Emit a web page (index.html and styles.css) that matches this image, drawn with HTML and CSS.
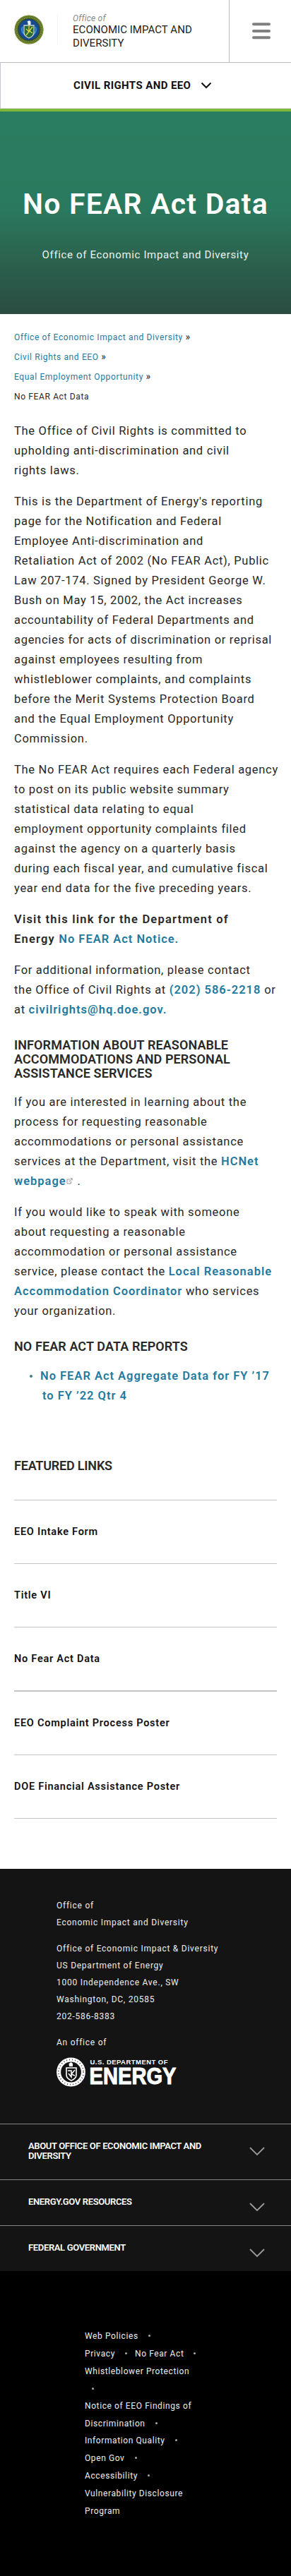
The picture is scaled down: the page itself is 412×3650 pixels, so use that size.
FILE: index.html
```html
<!DOCTYPE html>
<html lang="en">
<head>
<meta charset="utf-8">
<title>No FEAR Act Data</title>
<link rel="stylesheet" href="styles.css">
</head>
<body>
<header class="top">
  <div class="brand">
    <svg class="seal" viewBox="0 0 42 42" aria-hidden="true">
      <circle cx="21" cy="21" r="20.5" fill="#52691f"/>
      <circle cx="21" cy="21" r="19.8" fill="none" stroke="#93a83d" stroke-width=".8"/>
      <circle cx="21" cy="21" r="17.6" fill="none" stroke="#a9b45a" stroke-width="2" stroke-dasharray="1.2 1.3" opacity=".65"/>
      <circle cx="21" cy="21" r="15.2" fill="#164b91" stroke="#2d3f28" stroke-width=".8"/>
      <path d="M12 17q-3 6 3 11M30 17q3 6-3 11" fill="none" stroke="#3c8ed0" stroke-width="2"/>
      <path d="M18.500 9.500l3-1.500 2 1.500v5h-4v-3z" fill="#eef3f4"/>
      <path d="M14 15h14v10q0 5-7 8-7-3-7-8z" fill="#2a6a3a" stroke="#c7d3cc" stroke-width="1.300"/>
      <path d="M17 29l9-12M21 16v8l-4-4M26 26l-4-3" fill="none" stroke="#d9d748" stroke-width="1.300"/>
    </svg>
    <div class="brand-name"><em>Office of</em><span>ECONOMIC IMPACT AND</span><span>DIVERSITY</span></div>
  </div>
  <div class="menu"><svg width="26" height="24" viewBox="0 0 26 24"><path d="M2 2.200h22M2 12h22M2 21.300h22" stroke="#808080" stroke-width="4" stroke-linecap="round"/></svg></div>
</header>
<nav class="section-nav"><span>CIVIL RIGHTS AND EEO</span><svg width="16" height="10" viewBox="0 0 16 10"><path d="M1.500 1.500L8 8l6.500-6.500" fill="none" stroke="#111" stroke-width="2"/></svg></nav>
<section class="hero">
  <h1>No FEAR Act Data</h1>
  <p>Office of Economic Impact and Diversity</p>
</section>
<main>
  <ul class="crumbs">
    <li><a>Office of Economic Impact and Diversity</a> <span>»</span></li>
    <li><a>Civil Rights and EEO</a> <span>»</span></li>
    <li><a>Equal Employment Opportunity</a> <span>»</span></li>
    <li>No FEAR Act Data</li>
  </ul>
  <article class="copy">
    <p>The Office of Civil Rights is committed to<br>upholding anti-discrimination and civil<br>rights laws.</p>
    <p>This is the Department of Energy's reporting<br>page for the Notification and Federal<br>Employee Anti-discrimination and<br>Retaliation Act of 2002 (No FEAR Act), Public<br>Law 207-174. Signed by President George W.<br>Bush on May 15, 2002, the Act increases<br>accountability of Federal Departments and<br>agencies for acts of discrimination or reprisal<br>against employees resulting from<br>whistleblower complaints, and complaints<br>before the Merit Systems Protection Board<br>and the Equal Employment Opportunity<br>Commission.</p>
    <p>The No FEAR Act requires each Federal agency<br>to post on its public website summary<br>statistical data relating to equal<br>employment opportunity complaints filed<br>against the agency on a quarterly basis<br>during each fiscal year, and cumulative fiscal<br>year end data for the five preceding years.</p>
    <p><b>Visit this link for the Department of<br>Energy <a>No FEAR Act Notice</a></b><a>.</a></p>
    <p>For additional information, please contact<br>the Office of Civil Rights at <a>(202) 586-2218</a> or<br>at <a>civilrights@hq.doe.gov.</a></p>
    <h2>INFORMATION ABOUT REASONABLE<br>ACCOMMODATIONS AND PERSONAL<br>ASSISTANCE SERVICES</h2>
    <p>If you are interested in learning about the<br>process for requesting reasonable<br>accommodations or personal assistance<br>services at the Department, visit the <a>HCNet<br>webpage</a><svg class="ext" width="9" height="9" viewBox="0 0 9 9"><path d="M5 2H1v6h5.500V4.500M4 5l4-4M5.500.800H8.200V3.500" fill="none" stroke="#999" stroke-width="1"/></svg> .</p>
    <p>If you would like to speak with someone<br>about requesting a reasonable<br>accommodation or personal assistance<br>service, please contact the <a>Local Reasonable<br>Accommodation Coordinator</a> who services<br>your organization.</p>
    <h2 class="reports">NO FEAR ACT DATA REPORTS</h2>
    <ul class="report-list"><li><a>No FEAR Act Aggregate Data for FY ’17<br><span class="hang">to FY ’22 Qtr 4</span></a></li></ul>
  </article>
  <section class="featured">
    <h2>FEATURED LINKS</h2>
    <ul>
      <li>EEO Intake Form</li>
      <li>Title VI</li>
      <li class="heavy">No Fear Act Data</li>
      <li>EEO Complaint Process Poster</li>
      <li>DOE Financial Assistance Poster</li>
    </ul>
  </section>
</main>
<footer>
  <div class="contact">
    <p>Office of<br>Economic Impact and Diversity</p>
    <p>Office of Economic Impact &amp; Diversity<br>US Department of Energy<br>1000 Independence Ave., SW<br>Washington, DC, 20585<br>202-586-8383</p>
    <p>An office of</p>
    <svg class="doe" width="176" height="50" viewBox="0 -2 176 50">
      <circle cx="20.500" cy="21" r="17.400" fill="none" stroke="#fff" stroke-width="6"/>
      <circle cx="20.500" cy="21" r="17.600" fill="none" stroke="#222" stroke-width="1.800" stroke-dasharray=".8 3.200"/>
      <path d="M17.500 9l3-2 2.500 2v4h-5z" fill="#fff"/>
      <path d="M14 15h14v10q0 5-7 8-7-3-7-8z" fill="#141414" stroke="#fff" stroke-width="1.600"/>
      <path d="M16 19h5v9l-4-5M26 18l-5 6 5 2" fill="none" stroke="#fff" stroke-width="1.500"/>
      <text x="47.500" y="9.500" class="doe-small" textLength="110">U.S. DEPARTMENT OF</text>
      <text x="46.500" y="37.500" class="doe-big" textLength="123" lengthAdjust="spacingAndGlyphs">ENERGY</text>
    </svg>
  </div>
  <div class="panel tall"><h3>ABOUT OFFICE OF ECONOMIC IMPACT AND<br>DIVERSITY</h3><svg width="22" height="13" viewBox="0 0 22 13"><path d="M1 1l10 10L21 1" /></svg></div>
  <div class="panel"><h3>ENERGY.GOV RESOURCES</h3><svg width="22" height="13" viewBox="0 0 22 13"><path d="M1 1l10 10L21 1" /></svg></div>
  <div class="panel"><h3>FEDERAL GOVERNMENT</h3><svg width="22" height="13" viewBox="0 0 22 13"><path d="M1 1l10 10L21 1" /></svg></div>
  <div class="legal">
    <div>Web Policies<i></i></div>
    <div>Privacy<i></i><span>No Fear Act</span><i></i></div>
    <div class="tight">Whistleblower Protection<br><i class="alone"></i></div>
    <div class="tight">Notice of EEO Findings of<br>Discrimination<i></i></div>
    <div>Information Quality<i></i></div>
    <div>Open Gov<i></i></div>
    <div>Accessibility<i></i></div>
    <div class="tight">Vulnerability Disclosure<br>Program</div>
  </div>
</footer>
</body>
</html>
```
FILE: styles.css
```css
* { box-sizing: border-box; }
body { margin: 0; background: #fff; color: #282828; font-family: Roboto, "Liberation Sans", sans-serif; font-size: 16px; white-space: nowrap; font-kerning: normal; }
h1, h2, h3, p, ul { margin: 0; padding: 0; }
ul { list-style: none; }
svg { display: block; flex: none; }
a { color: #1f7a9f; }

.top { display: flex; height: 89px; border-bottom: 1px solid #bdbdbd; }
.brand { display: flex; width: 324px; padding-left: 20px; }
.seal { width: 42px; height: 42px; margin-top: 21px; }
.brand-name { display: flex; flex-direction: column; height: 43px; margin: 20px 0 0 19px; padding-left: 21px; border-left: 1px solid #f3f3f3; font-size: 15px; line-height: 19px; letter-spacing: .05px; color: #222; }
.brand-name em { font-size: 12px; line-height: 13px; color: #8a8a8a; letter-spacing: .2px; }
.menu { flex: 1; display: flex; align-items: flex-start; justify-content: center; padding: 32px 0 0 2px; border-left: 1px solid #bdbdbd; }

.section-nav { display: flex; align-items: center; height: 65px; padding-left: 103px; gap: 14px; border-left: 1px solid #c8c8d0; border-bottom: 1px solid #ddd; font-size: 15px; font-weight: 700; color: #111; letter-spacing: .4px; }

.hero { height: 291px; border-top: 4px solid #7db73b; background: linear-gradient(#2a7d60 0%, #2a795e 48%, #2b6550 70%, #2a4c41 100%); color: #fff; text-align: center; padding-top: 107px; }
.hero h1 { font-size: 41px; line-height: 48px; font-weight: 600; letter-spacing: 1.2px; }
.hero p { margin-top: 36px; font-size: 15px; line-height: 24px; letter-spacing: .65px; color: #e9f3ef; }

main { padding: 19px 20px 0; }
.crumbs { font-size: 12px; line-height: 28px; letter-spacing: .64px; }
.crumbs span { font-size: 14px; line-height: 1; letter-spacing: 0; }
.copy { padding-top: 21px; font-size: 16.5px; line-height: 28px; letter-spacing: .7px; }
.copy p { margin-bottom: 16px; }
.copy a, .copy b { font-weight: 600; letter-spacing: .98px; }
.copy b { letter-spacing: 1.2px; }
.copy b a { letter-spacing: .98px; }
h2 { font-size: 18px; line-height: 20px; font-weight: 600; letter-spacing: -.2px; }
.copy h2 { margin: 26px 0 17px; letter-spacing: .1px; }
.copy h2.reports { margin-bottom: 18px; }
.ext { display: inline-block; vertical-align: 1px; margin: 0 2px 0 0; }
.report-list { padding-left: 37px; }
.report-list .hang { padding-left: 3px; }
.report-list li::before { content: ""; float: left; width: 4px; height: 4px; margin: 12px 0 0 -15px; border-radius: 50%; background: #3d8080; }
.featured { padding-top: 75px; }
.featured ul { margin-top: 38px; border-top: 1px solid #c4c4c4; }
.featured li { height: 90px; border-bottom: 1px solid #c4c4c4; font-size: 14.5px; line-height: 90px; font-weight: 600; letter-spacing: .75px; color: #111; }
.featured li.heavy { height: 91px; border-bottom-width: 2px; }

footer { margin-top: 71px; background: #141414; color: #ededed; font-size: 12px; letter-spacing: .75px; }
.contact { height: 361px; padding: 40px 0 0 80px; line-height: 24px; }
.contact p { margin-bottom: 13px; }
.doe { margin-top: -6px; overflow: visible; }
.doe-small { font: 700 9.5px "Liberation Sans", sans-serif; letter-spacing: 0; fill: #fff; }
.doe-big { font: 700 33px "Liberation Sans", sans-serif; letter-spacing: 0; fill: #fff; stroke: #fff; stroke-width: 1; }
.panel { display: flex; justify-content: space-between; height: 65px; padding: 24px 37px 0 40px; border-top: 1px solid #858585; }
.panel.tall { height: 79px; }
.panel h3 { font-size: 13px; line-height: 14px; font-weight: 600; letter-spacing: -.35px; color: #fff; }
.panel svg { margin-top: 8px; fill: none; stroke: #9a9a9a; stroke-width: 1.8; }
.legal { height: 432px; padding: 80px 0 0 120px; background: #000; line-height: 25px; letter-spacing: .6px; }
.legal .tight { line-height: 24.500px; }
.legal i { display: inline-block; width: 3px; height: 3px; margin: 0 11px 0 14px; vertical-align: 3px; border-radius: 50%; background: #aaa; }
.legal i.alone { margin-left: 10px; }
```
